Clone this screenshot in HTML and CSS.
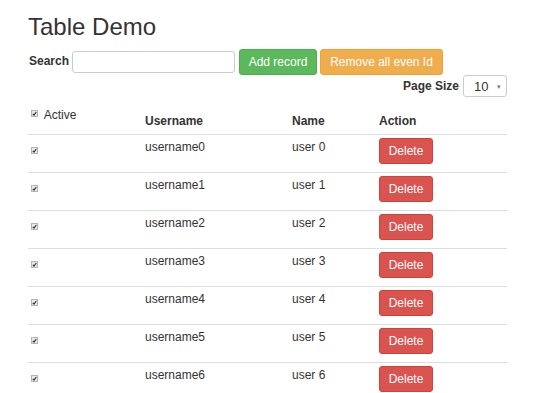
FILE: index.html
```html
<!DOCTYPE html>
<html>
<head>
<meta charset="utf-8">
<link rel="stylesheet" href="styles.css">
</head>
<body>
<div class="container">
  <h1 class="title">Table Demo</h1>
  <div class="toolbar">
    <label class="lbl" for="search">Search</label>
    <input id="search" class="input" type="text">
    <button class="btn btn-green">Add record</button>
    <button class="btn btn-orange">Remove all even Id</button>
  </div>
  <div class="pager">
    <span class="lbl">Page Size</span>
    <div class="select"><span>10</span><span class="arrow">▾</span></div>
  </div>
  <table class="grid">
    <colgroup><col class="c1"><col class="c2"><col class="c3"><col class="c4"></colgroup>
    <thead>
      <tr>
        <th class="first"><span class="cb"><svg width="7" height="7" viewBox="0 0 7 7"><rect x="0.5" y="0.5" width="6" height="6" fill="#e9e9e9" stroke="#b5b5b5"/><path d="M1.8 3.8 L3 5 L5.3 2" fill="none" stroke="#333" stroke-width="1.2"/></svg></span> Active</th>
        <th>Username</th>
        <th>Name</th>
        <th>Action</th>
      </tr>
    </thead>
    <tbody id="rows"></tbody>
  </table>
</div>
<script>
var tb = document.getElementById('rows');
var html = '';
for (var i = 0; i < 7; i++) {
  html += '<tr><td class="first"><span class="cb block"><svg width="7" height="7" viewBox="0 0 7 7"><rect x="0.5" y="0.5" width="6" height="6" fill="#e9e9e9" stroke="#b5b5b5"/><path d="M1.8 3.8 L3 5 L5.3 2" fill="none" stroke="#333" stroke-width="1.2"/></svg></span></td>' +
    '<td>username' + i + '</td><td>user ' + i + '</td><td><button class="btn btn-red">Delete</button></td></tr>';
}
tb.innerHTML = html;
</script>
</body>
</html>
```
FILE: styles.css
```css
html, body {
  margin: 0;
  padding: 0;
  background: #fff;
}
body {
  font-family: "Liberation Sans", Arial, sans-serif;
  font-size: 12px;
  line-height: 17px;
  color: #333;
}
.container {
  width: 479px;
  padding-left: 28px;
}
.title {
  margin: 13px 0 0 0;
  font-size: 24px;
  line-height: 27px;
  font-weight: 400;
  color: #333;
}
.toolbar {
  display: flex;
  align-items: center;
  margin-top: 8px;
  height: 27px;
}
.lbl {
  font-weight: 700;
  margin-left: 1px;
}
.input {
  box-sizing: border-box;
  width: 163px;
  height: 22px;
  margin: 0 4px 0 3px;
  border: 1px solid #ccc;
  border-radius: 3px;
  padding: 0 6px;
  font: inherit;
}
.btn {
  box-sizing: border-box;
  height: 26px;
  padding: 0;
  border: 1px solid transparent;
  border-radius: 3px;
  font-family: "Liberation Sans", Arial, sans-serif;
  font-size: 12px;
  color: #fff;
  white-space: nowrap;
  text-align: center;
  cursor: pointer;
}
.btn-green {
  width: 78px;
  background: #5cb85c;
  border-color: #4cae4c;
  margin-right: 3px;
}
.btn-orange {
  width: 123px;
  background: #f0ad4e;
  border-color: #eea236;
}
.btn-red {
  width: 54px;
  background: #d9534f;
  border-color: #d43f3a;
  margin-top: -1px;
}
.pager {
  display: flex;
  justify-content: flex-end;
  align-items: center;
  margin-top: 0;
  height: 22px;
}
.select {
  box-sizing: border-box;
  width: 44px;
  height: 22px;
  margin-left: 4px;
  border: 1px solid #ccc;
  border-radius: 3px;
  display: flex;
  align-items: center;
  justify-content: space-between;
  padding: 0 5px 0 10px;
  font-size: 13px;
}
.select .arrow {
  font-size: 7px;
  color: #777;
}
.grid {
  width: 479px;
  margin-top: 6px;
  border-collapse: collapse;
  table-layout: fixed;
}
.c1 { width: 109px; }
.c2 { width: 147px; }
.c3 { width: 87px; }
.c4 { width: 136px; }
.grid th {
  height: 23px;
  padding: 4px 8px;
  text-align: left;
  vertical-align: bottom;
  font-weight: 700;
  border-bottom: 1px solid #ddd;
}
.grid th.first {
  vertical-align: top;
  font-weight: 400;
  padding-left: 3px;
}
.grid td {
  height: 26px;
  padding: 4px 8px 7px 8px;
  vertical-align: top;
  border-top: 1px solid #ddd;
}
.grid tbody tr:first-child td {
  border-top: none;
}
.grid td.first {
  padding-left: 3px;
}
.cb {
  display: inline-block;
  width: 7px;
  height: 7px;
  vertical-align: 2px;
  margin-right: 3px;
}
.cb svg {
  display: block;
}
.cb.block {
  display: block;
  margin-top: 8px;
}
```
